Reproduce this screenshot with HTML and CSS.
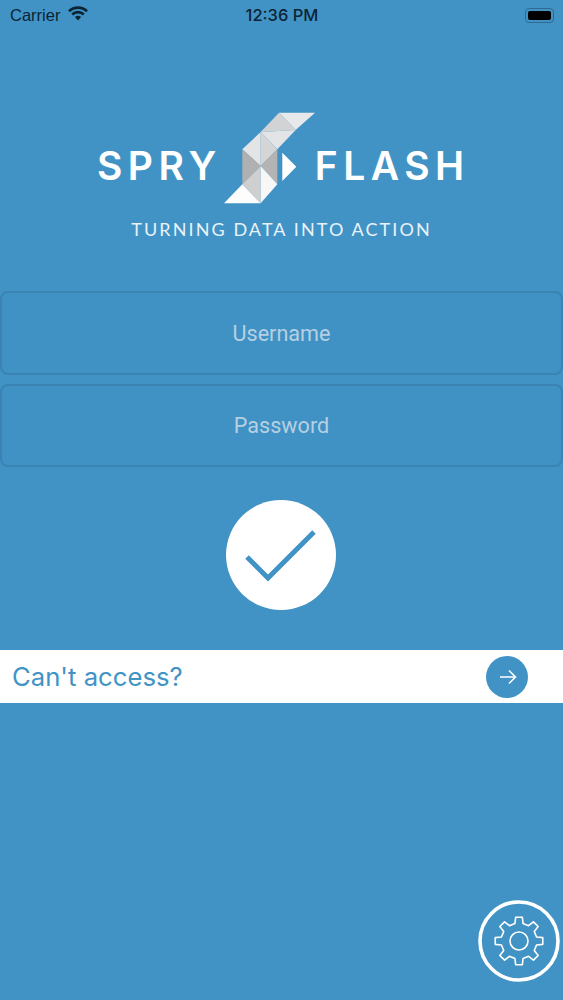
FILE: index.html
```
<!DOCTYPE html>
<html lang="en">
<head>
<meta charset="utf-8">
<title>Spry Flash</title>
<link rel="stylesheet" href="styles.css">
</head>
<body>
<main class="screen">
  <header class="status">
    <div class="status-left">
      <span>Carrier</span>
      <svg class="wifi" viewBox="0 0 20 15" width="20" height="15">
        <path d="M1 5.2C6 .4 14 .4 19 5.2" class="wifi-arc"/>
        <path d="M4.2 8.4C7.4 5.4 12.6 5.4 15.8 8.4" class="wifi-arc"/>
        <path d="M10 14.4 6.9 10.9C8.7 9.5 11.3 9.5 13.1 10.9Z" class="wifi-dot"/>
      </svg>
    </div>
    <div class="status-time">12:36 PM</div>
    <div class="battery"><span class="battery-fill"></span></div>
  </header>

  <section class="brand">
    <div class="logo">
      <span class="logo-word logo-left">SPRY</span>
      <svg class="mark" viewBox="0 0 330 315" width="110" height="105">
        <polygon points="195,20 303,20 245,72" fill="#e6e8ea"/>
        <polygon points="195,20 245,72 140,78" fill="#d2d3d4"/>
        <polygon points="140,78 245,72 190,130" fill="#e3e4e6"/>
        <polygon points="85,130 140,78 140,180" fill="#e3e4e6"/>
        <polygon points="140,78 190,130 140,180" fill="#d4d5d6"/>
        <polygon points="85,130 140,180 85,235" fill="#b0b0b0"/>
        <polygon points="190,130 140,180 190,235" fill="#b4b4b4"/>
        <polygon points="85,235 140,180 140,292" fill="#cfcfcf"/>
        <polygon points="140,180 190,235 140,292" fill="#f7f7f7"/>
        <polygon points="30,292 85,235 140,292" fill="#fdfdfd"/>
        <polygon points="205,140 247,182 205,225" fill="#fff"/>
      </svg>
      <span class="logo-word logo-right">FLASH</span>
    </div>
    <p class="tagline">TURNING DATA INTO ACTION</p>
  </section>

  <form class="login">
    <input class="field" type="text" placeholder="Username">
    <input class="field" type="password" placeholder="Password">
    <button class="submit" type="button" aria-label="Log in">
      <svg viewBox="0 0 110 110" width="110" height="110">
        <path class="check" d="M21 57 42 78 88 32"/>
      </svg>
    </button>
  </form>

  <a class="access">
    <span class="access-text">Can't access?</span>
    <span class="access-go">
      <svg viewBox="0 0 42 42" width="42" height="42">
        <path class="arrow" d="M14 21H29M23 14.5 29.5 21 23 27.5"/>
      </svg>
    </span>
  </a>

  <button class="settings" type="button" aria-label="Settings">
    <svg viewBox="-41 -41 82 82" width="82" height="82">
      <circle class="ring" r="39"/>
      <polygon class="gear" points="-4.05,-17.54 -3.34,-23.77 3.34,-23.77 4.05,-17.54 9.54,-15.27 14.45,-19.17 19.17,-14.45 15.27,-9.54 17.54,-4.05 23.77,-3.34 23.77,3.34 17.54,4.05 15.27,9.54 19.17,14.45 14.45,19.17 9.54,15.27 4.05,17.54 3.34,23.77 -3.34,23.77 -4.05,17.54 -9.54,15.27 -14.45,19.17 -19.17,14.45 -15.27,9.54 -17.54,4.05 -23.77,3.34 -23.77,-3.34 -17.54,-4.05 -15.27,-9.54 -19.17,-14.45 -14.45,-19.17 -9.54,-15.27"/>
      <circle class="gear" r="9"/>
    </svg>
  </button>
</main>
</body>
</html>
```

FILE: styles.css
```
* { box-sizing: border-box; }
html, body { margin: 0; padding: 0; }
body { background: #4293c5; }

.screen {
  width: 563px;
  height: 1000px;
  background: #4293c5;
  display: flex;
  flex-direction: column;
  overflow: hidden;
  font-family: "Liberation Sans", Arial, sans-serif;
}

.status {
  height: 30px;
  padding: 0 9px 0 10px;
  display: grid;
  grid-template-columns: 1fr auto 1fr;
  align-items: center;
  color: #0b2434;
  font-size: 16.5px;
}
.status-left { display: flex; align-items: center; gap: 8px; }
.wifi { display: block; margin-top: -3px; }
.wifi-arc { fill: none; stroke: #0b2434; stroke-width: 2.8; }
.wifi-dot { fill: #0b2434; }
.status-time { font-family: "Inter", sans-serif; font-weight: 500; font-size: 16.5px; }
.battery {
  justify-self: end;
  width: 29px;
  height: 15px;
  padding: 2px;
  border: 1px solid #2f6a90;
  border-radius: 4px;
}
.battery-fill { display: block; height: 100%; background: #000; border-radius: 2px; }

.brand {
  margin-top: 76px;
  display: flex;
  flex-direction: column;
  color: #fff;
}
.logo { height: 105px; padding-left: 97px; display: flex; align-items: center; }
.logo-word {
  font-family: "Inter", sans-serif;
  font-weight: 600;
  font-size: 39px;
  line-height: 1;
  letter-spacing: 5.5px;
  margin-top: 14px;
}
.logo-left { margin-right: -8px; }
.logo-right { margin-left: -9px; }
.mark { display: block; flex: none; }
.tagline {
  margin: 7px 0 0;
  text-align: center;
  font-family: "Lato", sans-serif;
  font-size: 18px;
  line-height: 22px;
  letter-spacing: 2.1px;
  color: #e8f2f8;
}

.login {
  margin-top: 51px;
  display: flex;
  flex-direction: column;
  align-items: center;
}
.field {
  display: block;
  width: 100%;
  height: 84px;
  margin-bottom: 9px;
  background: #4092c5;
  border: 2px solid #3a83b3;
  border-radius: 8px;
  text-align: center;
  font-family: "Roboto", sans-serif;
  font-size: 21.6px;
  color: #fff;
  outline: none;
}
.field + .field { height: 83px; }
.field::placeholder { color: #b6d0e2; opacity: 1; }

.submit {
  width: 110px;
  height: 110px;
  margin: 24px 1px 0 0;
  padding: 0;
  border: 0;
  border-radius: 50%;
  background: #fff;
}
.submit svg { display: block; }
.check { fill: none; stroke: #4293c5; stroke-width: 5; }

.access {
  margin-top: 40px;
  height: 53px;
  padding: 0 35px 0 12px;
  display: flex;
  align-items: center;
  justify-content: space-between;
  background: #fff;
}
.access-text {
  font-family: "Inter", sans-serif;
  font-size: 25.7px;
  color: #4293c5;
}
.access-go {
  width: 42px;
  height: 42px;
  border-radius: 50%;
  background: #4293c5;
}
.access-go svg { display: block; }
.arrow { fill: none; stroke: #fff; stroke-width: 1.6; }

.settings {
  margin-top: auto;
  margin-bottom: 18px;
  margin-right: 3px;
  align-self: flex-end;
  width: 82px;
  height: 82px;
  padding: 0;
  border: 0;
  background: none;
}
.settings svg { display: block; }
.ring { fill: none; stroke: #fff; stroke-width: 3.6; }
.gear { fill: none; stroke: #fff; stroke-width: 1.6; stroke-linejoin: round; }
```
